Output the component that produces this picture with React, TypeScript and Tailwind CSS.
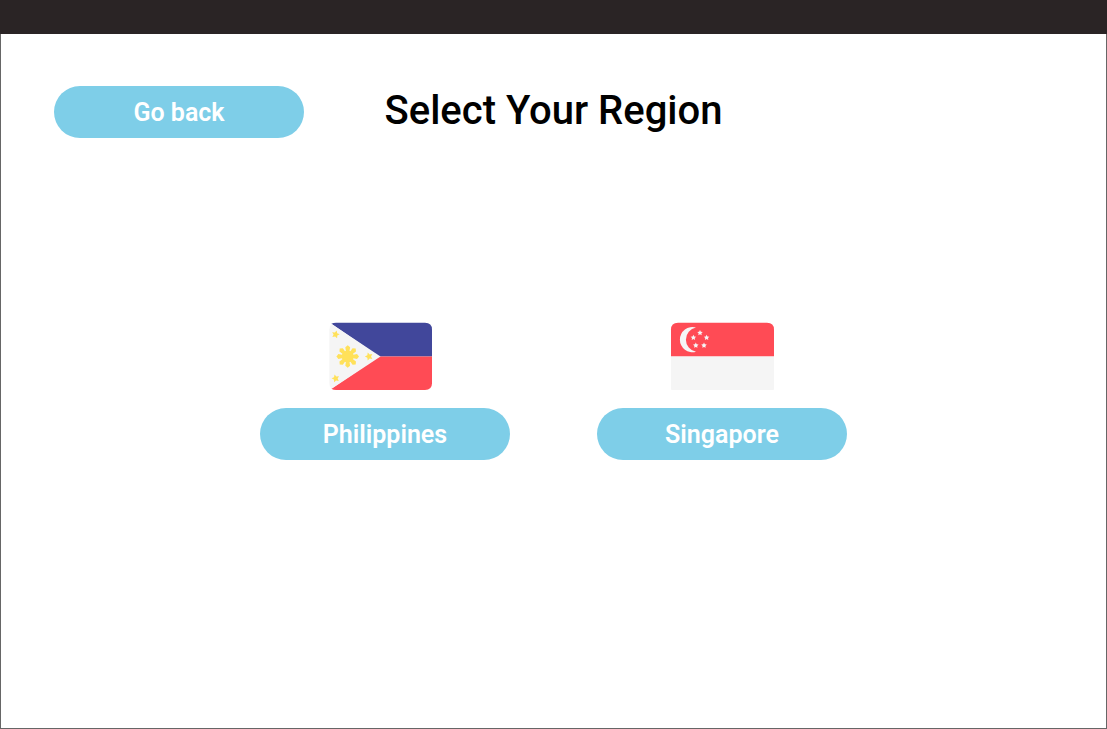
import React from "react";

type StarProps = { cx: number; cy: number; r: number; turn?: number };

function Star({ cx, cy, r, turn = 0 }: StarProps) {
  const points = Array.from({ length: 10 }, (_, i) => {
    const radius = i % 2 === 0 ? r : r * 0.5;
    const angle = ((i * 36 - 90 + turn) * Math.PI) / 180;
    return `${(cx + radius * Math.cos(angle)).toFixed(2)},${(cy + radius * Math.sin(angle)).toFixed(2)}`;
  }).join(" ");
  return <polygon points={points} />;
}

function PhilippinesFlag() {
  const rays = [0, 45, 90, 135, 180, 225, 270, 315];
  return (
    <svg className="h-[68px] w-28" viewBox="0 0 112 68" role="img" aria-label="Flag of the Philippines">
      <path d="M2.4 1.8Q4.4.7 7 .7H96Q103 .7 103 7.5V34.5H50Z" fill="#41479b" />
      <path d="M50 34.5H103V61.3Q103 68 96 68H7Q4.4 68 2.4 66.7Z" fill="#ff4b55" />
      <path d="M2.6 2 51.5 34.4 2.6 66.8Q.3 65 .3 61V7.7Q.3 4 2.6 2Z" fill="#f5f5f5" />
      <g fill="#ffe15a">
        <circle cx="18.7" cy="34.5" r="6" />
        {rays.map((angle) => (
          <path
            key={angle}
            d="M17.1 30 16.3 25.2 18.7 23.2 21.1 25.2 20.3 30Z"
            transform={`rotate(${angle} 18.7 34.5)`}
          />
        ))}
        <Star cx={6.6} cy={12.5} r={4.1} turn={15} />
        <Star cx={6.6} cy={56.5} r={4.1} turn={-15} />
        <Star cx={40} cy={34.5} r={4.1} turn={-18} />
      </g>
    </svg>
  );
}

function SingaporeFlag() {
  return (
    <svg className="h-[68px] w-28" viewBox="0 0 112 68" role="img" aria-label="Flag of Singapore">
      <path d="M5 34.5V7.5Q5 .7 12 .7H101Q108 .7 108 7.5V34.5Z" fill="#ff4b55" />
      <path d="M5 34.5H108V67Q108 68 107 68H6Q5 68 5 67Z" fill="#f5f5f5" />
      <g fill="#f5f5f5">
        <path d="M30 5.6A12.6 12.6 0 1 0 30 29.8A12.3 12.3 0 0 1 30 5.6Z" />
        <Star cx={34} cy={10.8} r={2.9} />
        <Star cx={27.4} cy={15.6} r={2.9} />
        <Star cx={40.6} cy={15.6} r={2.9} />
        <Star cx={29.8} cy={23.5} r={2.9} />
        <Star cx={38} cy={23.5} r={2.9} />
      </g>
    </svg>
  );
}

function PillButton({ children }: { children: React.ReactNode }) {
  return (
    <button
      type="button"
      className="h-13 w-[250px] cursor-pointer rounded-full bg-[#7ecee8] pt-0.5 text-[25px] font-semibold text-white"
    >
      {children}
    </button>
  );
}

export default function App() {
  return (
    <div className="flex min-h-screen flex-col bg-white font-[Roboto,sans-serif] text-black">
      <header className="h-[34px] bg-[#2a2425]" />
      <main className="flex-1 border-x border-b border-[#666666] px-[53px] pt-[52px]">
        <div className="grid grid-cols-[1fr_auto_1fr] items-start">
          <div>
            <PillButton>Go back</PillButton>
          </div>
          <h1 className="text-[40px] leading-[50px] font-medium">Select Your Region</h1>
        </div>
        <div className="mt-46 flex flex-wrap justify-center gap-[87px]">
          <section className="flex flex-col items-center gap-[18px]">
            <PhilippinesFlag />
            <PillButton>Philippines</PillButton>
          </section>
          <section className="flex flex-col items-center gap-[18px]">
            <SingaporeFlag />
            <PillButton>Singapore</PillButton>
          </section>
        </div>
      </main>
    </div>
  );
}
